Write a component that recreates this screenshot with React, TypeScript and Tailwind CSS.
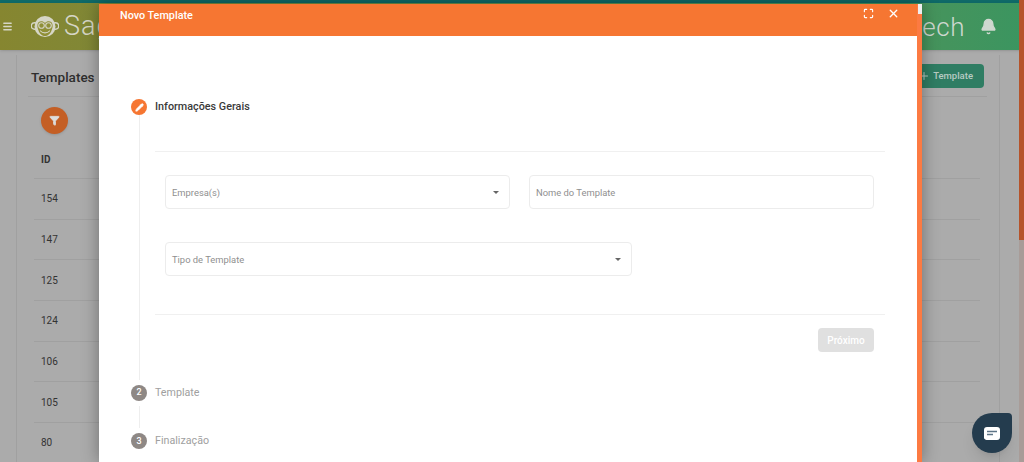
import { Bell, Filter, Maximize, Menu, Pencil, Plus, X } from 'lucide-react'

const rows = ['154', '147', '125', '124', '106', '105', '80']

function Caret() {
  return <span className="h-0 w-0 border-x-[3.5px] border-t-[3.5px] border-x-transparent border-t-[#666]" />
}

function Monkey() {
  return (
    <svg width="28" height="22" viewBox="0 0 28 22" className="shrink-0">
      <circle cx="3.5" cy="10" r="3.2" fill="none" stroke="#d6d6c6" strokeWidth="1.4" />
      <circle cx="24.5" cy="10" r="3.2" fill="none" stroke="#d6d6c6" strokeWidth="1.4" />
      <circle cx="14" cy="10.5" r="10.5" fill="#d6d6c6" />
      <path d="M14 7c2-2.5 7-2.5 7.500 1.500c.5 3-.5 4.500-1 6c-1 3.500-4 5.500-6.500 5.500s-5.500-2-6.500-5.500c-.5-1.500-1.500-3-1-6C7 4.500 12 4.500 14 7z" fill="#8f8f36" />
      <circle cx="10.500" cy="9.500" r="2.800" fill="none" stroke="#d6d6c6" strokeWidth="1.100" />
      <circle cx="17.500" cy="9.500" r="2.800" fill="none" stroke="#d6d6c6" strokeWidth="1.100" />
      <path d="M9.500 15c2 2.500 7 2.500 9 0" fill="none" stroke="#d6d6c6" strokeWidth="1.200" strokeLinecap="round" />
    </svg>
  )
}

function Field({ label, select, className }: { label: string; select?: boolean; className: string }) {
  return (
    <div className={`flex h-[34px] items-center justify-between rounded border border-[#ececec] pl-[6px] pr-[10px] text-[9.4px] text-[#8f8f8f] ${className}`}>
      <span className="pt-[1px]">{label}</span>
      {select && <Caret />}
    </div>
  )
}

function Step({ n, label }: { n: string; label: string }) {
  return (
    <div className="relative flex items-center gap-2 bg-white py-[5px] text-[10.7px] text-[#a0a0a0]">
      <span className="flex h-4 w-4 items-center justify-center rounded-full bg-[#8e8885] text-[9px] font-medium text-white">{n}</span>
      {label}
    </div>
  )
}

export default function App() {
  return (
    <div className="relative h-[462px] w-[1024px] overflow-hidden bg-[#ababab] font-['Roboto',sans-serif]">
      {/* Pagina atras do modal */}
      <div className="h-[3px] bg-[#0f6a68]" />
      <header className="flex h-[47px] items-center justify-between bg-gradient-to-r from-[#868630] to-[#3b9560] pl-[2px] pr-[27px] shadow">
        <div className="flex items-center text-[#d6d6c6]">
          <Menu size={11} strokeWidth={3} />
          <span className="ml-[18px]"><Monkey /></span>
          <span className="ml-[5px] text-[27px] leading-none font-light tracking-[1px]">Sag</span>
        </div>
        <div className="flex items-center gap-[15px] text-[#cfd8d0]">
          <span className="text-[26px] leading-none font-light tracking-[0.5px]">tech</span>
          <Bell size={17} fill="currentColor" />
        </div>
      </header>
      <div className="mt-[5px] ml-[16px] h-[420px] w-[984px] border-x border-[#a0a0a0] pt-[9px] pr-[12px] pl-[11px]">
        <div className="flex items-center justify-between border-b border-[#a0a0a0] pr-[3px] pb-[8px] pl-[3px]">
          <span className="pt-[2px] text-[13.5px] font-medium text-[#2e2e2e]">Templates</span>
          <span className="flex h-[24px] w-[72px] items-center justify-end gap-[3px] rounded-sm bg-[#2f7d63] pr-[11px] text-[9.5px] font-medium text-[#b8cbc3]">
            <Plus size={12} />
            Template
          </span>
        </div>
        <div className="mt-[10px] ml-[12.5px] flex h-[27px] w-[27px] items-center justify-center rounded-full bg-[#c45f25] shadow">
          <Filter size={11} fill="#ddd" color="#ddd" />
        </div>
        <div className="mt-[6px] mr-[7px] ml-[6px] text-[10px] text-[#333]">
          <div className="flex h-[38px] items-center pl-[7px] font-bold">ID</div>
          {rows.map(id => (
            <div key={id} className="flex h-[40.7px] items-center border-t border-[#a0a0a0] pl-[7px]">{id}</div>
          ))}
        </div>
      </div>

      {/* Modal */}
      <div className="absolute top-[4px] left-[99px] flex h-[458px] w-[823px] flex-col border-r-[5px] border-[#fc7a42] bg-white shadow-[0_0_16px_rgba(0,0,0,0.35)]">
        <div className="flex h-[32px] shrink-0 items-start justify-between bg-[#f67632] pt-[4px] pr-[17px] pl-[21px] text-white">
          <span className="text-[10.8px] font-medium">Novo Template</span>
          <div className="-mt-[1px] flex items-center gap-[13px]">
            <Maximize size={11} strokeWidth={2.5} />
            <X size={13} strokeWidth={2.5} />
          </div>
        </div>
        <div className="relative flex-1 pt-[63px] pl-[32px]">
          <div className="absolute top-[70px] bottom-[10px] left-[39.5px] w-px bg-[#eeeeee]" />
          <div className="relative flex items-center gap-2 text-[10.8px] font-medium text-[#3a3a3a]">
            <span className="flex h-4 w-4 items-center justify-center rounded-full bg-[#f67632] text-white">
              <Pencil size={9} fill="white" />
            </span>
            Informações Gerais
          </div>
          <div className="mt-[36px] mr-[32px] ml-[24px] border-y border-[#f0f0f0] pt-[23px] pb-[38px]">
            <div className="flex gap-[19px] px-[10px]">
              <Field label="Empresa(s)" select className="w-[345px]" />
              <Field label="Nome do Template" className="w-[345px]" />
            </div>
            <div className="mt-[33px] px-[10px]">
              <Field label="Tipo de Template" select className="w-[467px]" />
            </div>
          </div>
          <div className="mt-[13px] mr-[43px] flex justify-end">
            <span className="flex h-[24px] w-[56px] items-center justify-center rounded-sm bg-[#e0e0e0] text-[10px] font-medium text-white">Próximo</span>
          </div>
          <div className="mt-[28px]">
            <Step n="2" label="Template" />
          </div>
          <div className="mt-[22px]">
            <Step n="3" label="Finalização" />
          </div>
        </div>
        <div className="absolute top-0 -right-[5px] h-[10px] w-[4px] bg-[#eeeeee]" />
      </div>

      <div className="absolute top-[413px] left-[972px] flex h-[40px] w-[40px] items-center justify-center rounded-[50%] rounded-tr-[4px] bg-[#243c4e] shadow-lg">
        <svg width="16" height="13" viewBox="0 0 16 13">
          <path d="M3 0h10a3 3 0 0 1 3 3v7a3 3 0 0 1-3 3H2.500a2 2 0 0 1-1.500-.7C.5 12 0 11.500 0 11V3a3 3 0 0 1 3-3z" fill="white" />
          <path d="M3 4.500h10M3 7.500h6" stroke="#5d7486" strokeWidth="1.300" />
        </svg>
      </div>
      <div className="absolute top-0 right-0 h-full w-[5px] bg-[#a89c98]">
        <div className="h-[240px] bg-[#b5532a]" />
      </div>
    </div>
  )
}
